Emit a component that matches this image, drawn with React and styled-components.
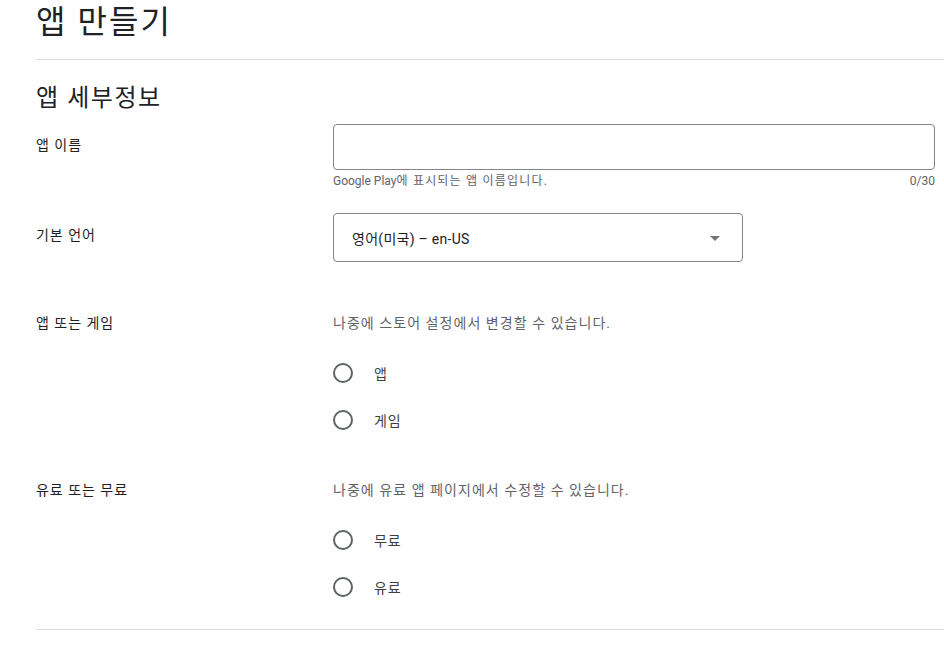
import React from "react";
import styled, { createGlobalStyle } from "styled-components";

const GlobalStyle = createGlobalStyle`
  body {
    margin: 0;
    background: #ffffff;
    font-family: Roboto, "Noto Sans CJK KR", sans-serif;
    color: #202124;
  }
`;

const Page = styled.div`
  padding-left: 36px;
  overflow: hidden;
`;

const Header = styled.header`
  height: 59px;
  border-bottom: 1px solid #dadce0;
`;

const Title = styled.h1`
  margin: 0;
  font-size: 32px;
  font-weight: 400;
  line-height: 44px;
  letter-spacing: 0.065em;
  color: #202124;
`;

const SectionTitle = styled.h2`
  margin: 22px 0 0;
  font-size: 24px;
  font-weight: 400;
  line-height: 32px;
  letter-spacing: 0.065em;
  color: #202124;
`;

const Row = styled.div`
  display: grid;
  grid-template-columns: 297px 602px;
  margin-top: ${(p) => p.$gap}px;
`;

const Label = styled.div`
  font-size: 14px;
  line-height: 20px;
  letter-spacing: 0.07em;
  padding-top: ${(p) => p.$pad || 0}px;
  color: #202124;
`;

const Field = styled.div`
  display: flex;
  flex-direction: column;
`;

const TextInput = styled.input`
  box-sizing: border-box;
  width: 100%;
  height: 46px;
  border: 1px solid #80868b;
  border-radius: 4px;
  padding: 0 16px;
  font: inherit;
  font-size: 14px;
  outline: none;
`;

const Helper = styled.div`
  display: flex;
  justify-content: space-between;
  margin-top: 3px;
  font-size: 12px;
  line-height: 16px;
  color: #5f6368;
`;

const HelperText = styled.span`
  letter-spacing: 0.1em;
`;

const Latin = styled.span`
  letter-spacing: 0;
`;

const Select = styled.div`
  box-sizing: border-box;
  width: 410px;
  height: 49px;
  border: 1px solid #80868b;
  border-radius: 4px;
  display: flex;
  align-items: center;
  justify-content: space-between;
  padding: 0 22px 0 18px;
  font-size: 14px;
  letter-spacing: 0.02em;
  color: #202124;
`;

const Arrow = styled.span`
  width: 0;
  height: 0;
  border-left: 5px solid transparent;
  border-right: 5px solid transparent;
  border-top: 5px solid #757575;
  margin-top: 2px;
`;

const Description = styled.div`
  font-size: 14px;
  line-height: 20px;
  letter-spacing: 0.075em;
  color: #5f6368;
`;

const RadioGroup = styled.div`
  margin-top: 16px;
  display: flex;
  flex-direction: column;
`;

const RadioRow = styled.label`
  height: 47px;
  display: flex;
  align-items: center;
  gap: 21px;
  font-size: 14px;
  letter-spacing: 0.07em;
  color: #3c4043;
`;

const Circle = styled.span`
  box-sizing: border-box;
  width: 20px;
  height: 20px;
  border: 2px solid #5f6368;
  border-radius: 50%;
`;

const Divider = styled.div`
  margin-top: 19px;
  border-top: 1px solid #dadce0;
`;

function Radio({ label }) {
  return (
    <RadioRow>
      <Circle />
      {label}
    </RadioRow>
  );
}

export default function App() {
  return (
    <Page>
      <GlobalStyle />
      <Header>
        <Title>앱 만들기</Title>
      </Header>
      <SectionTitle>앱 세부정보</SectionTitle>

      <Row $gap={10}>
        <Label $pad={11}>앱 이름</Label>
        <Field>
          <TextInput />
          <Helper>
            <HelperText>
              <Latin>Google Play</Latin>에 표시되는 앱 이름입니다.
            </HelperText>
            <span>0/30</span>
          </Helper>
        </Field>
      </Row>

      <Row $gap={24}>
        <Label $pad={12}>기본 언어</Label>
        <Select>
          <span>영어(미국) – en-US</span>
          <Arrow />
        </Select>
      </Row>

      <Row $gap={51}>
        <Label>앱 또는 게임</Label>
        <Field>
          <Description>나중에 스토어 설정에서 변경할 수 있습니다.</Description>
          <RadioGroup>
            <Radio label="앱" />
            <Radio label="게임" />
          </RadioGroup>
        </Field>
      </Row>

      <Row $gap={37}>
        <Label>유료 또는 무료</Label>
        <Field>
          <Description>나중에 유료 앱 페이지에서 수정할 수 있습니다.</Description>
          <RadioGroup>
            <Radio label="무료" />
            <Radio label="유료" />
          </RadioGroup>
        </Field>
      </Row>

      <Divider />
    </Page>
  );
}
